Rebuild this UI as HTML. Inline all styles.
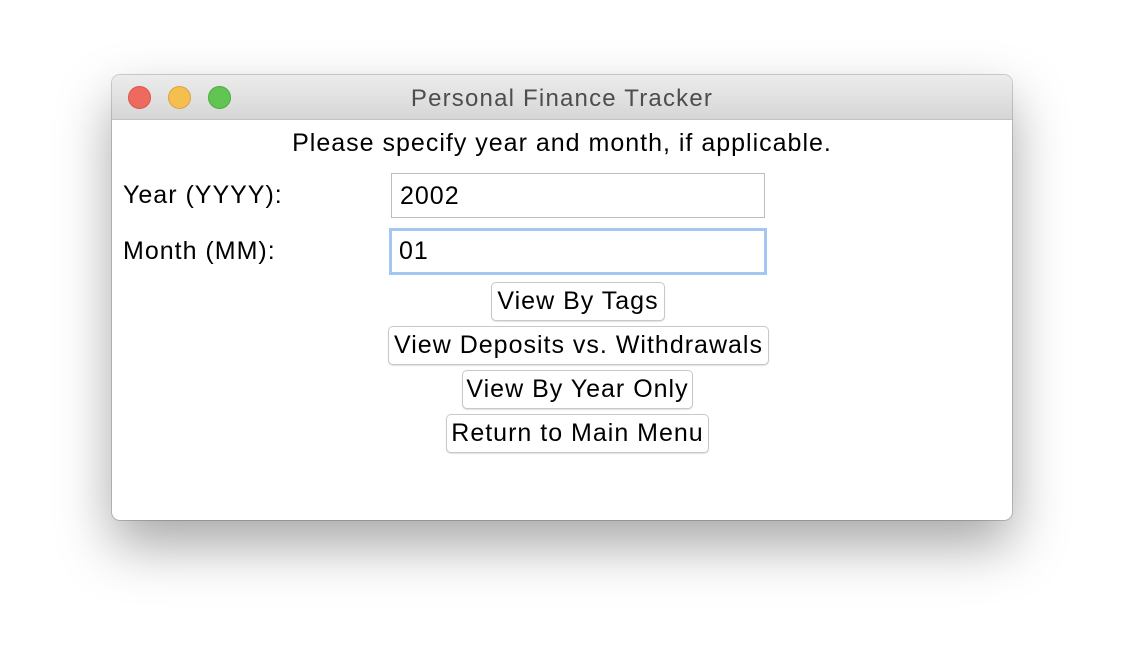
<!DOCTYPE html>
<html><head><style>
body{margin:0;width:1124px;height:668px;background:#fff;font-family:"Liberation Sans",sans-serif;position:relative;overflow:hidden}
.win{position:absolute;left:112px;top:75px;width:900px;height:445px;border-radius:8px;background:#fff;box-shadow:0 25px 55px rgba(0,0,0,0.35),0 0 0 1px rgba(0,0,0,0.18);overflow:hidden}
.tb{height:44px;background:linear-gradient(#ececec,#d6d6d6);border-bottom:1px solid #c2c2c2;position:relative}
.dot{position:absolute;top:11px;width:23px;height:23px;border-radius:50%}
.tt{position:absolute;left:0;right:0;top:10px;text-align:center;font-size:24px;letter-spacing:1.2px;color:#4d4d4d}
.a{position:absolute;font-size:25px;letter-spacing:1px;color:#000;white-space:nowrap}
.in{position:absolute;border:1px solid #bdbdbd;background:#fff;box-sizing:border-box;font-size:25px;letter-spacing:1px;padding-left:8px;line-height:44px}
.btn{position:absolute;border:1px solid #c8c8c8;border-radius:5px;background:#fff;box-sizing:border-box;font-size:25px;letter-spacing:1px;text-align:center;line-height:36px;box-shadow:0 1px 1px rgba(0,0,0,0.12);white-space:nowrap}
</style></head><body>
<div class="win">
<div class="tb">
<div class="dot" style="left:16px;background:#ee6a5f;border:1px solid #d75549;box-sizing:border-box"></div>
<div class="dot" style="left:56px;background:#f5bf4f;border:1px solid #d9a441;box-sizing:border-box"></div>
<div class="dot" style="left:96px;background:#61c554;border:1px solid #4fa93f;box-sizing:border-box"></div>
<div class="tt">Personal Finance Tracker</div>
</div>
<div class="a" style="left:0;right:0;top:54px;text-align:center">Please specify year and month, if applicable.</div>
<div class="a" style="left:11px;top:106px">Year (YYYY):</div>
<div class="a" style="left:11px;top:162px">Month (MM):</div>
<div class="in" style="left:279px;top:98px;width:374px;height:45px">2002</div>
<div class="in" style="left:277px;top:153px;width:378px;height:47px;border:3px solid #a3c6f3;padding-left:7px;line-height:41px">01</div>
<div class="btn" style="left:379px;top:207px;width:174px;height:39px">View By Tags</div>
<div class="btn" style="left:276px;top:251px;width:381px;height:39px">View Deposits vs. Withdrawals</div>
<div class="btn" style="left:350px;top:295px;width:231px;height:39px">View By Year Only</div>
<div class="btn" style="left:334px;top:339px;width:263px;height:39px">Return to Main Menu</div>
</div>
</body></html>
